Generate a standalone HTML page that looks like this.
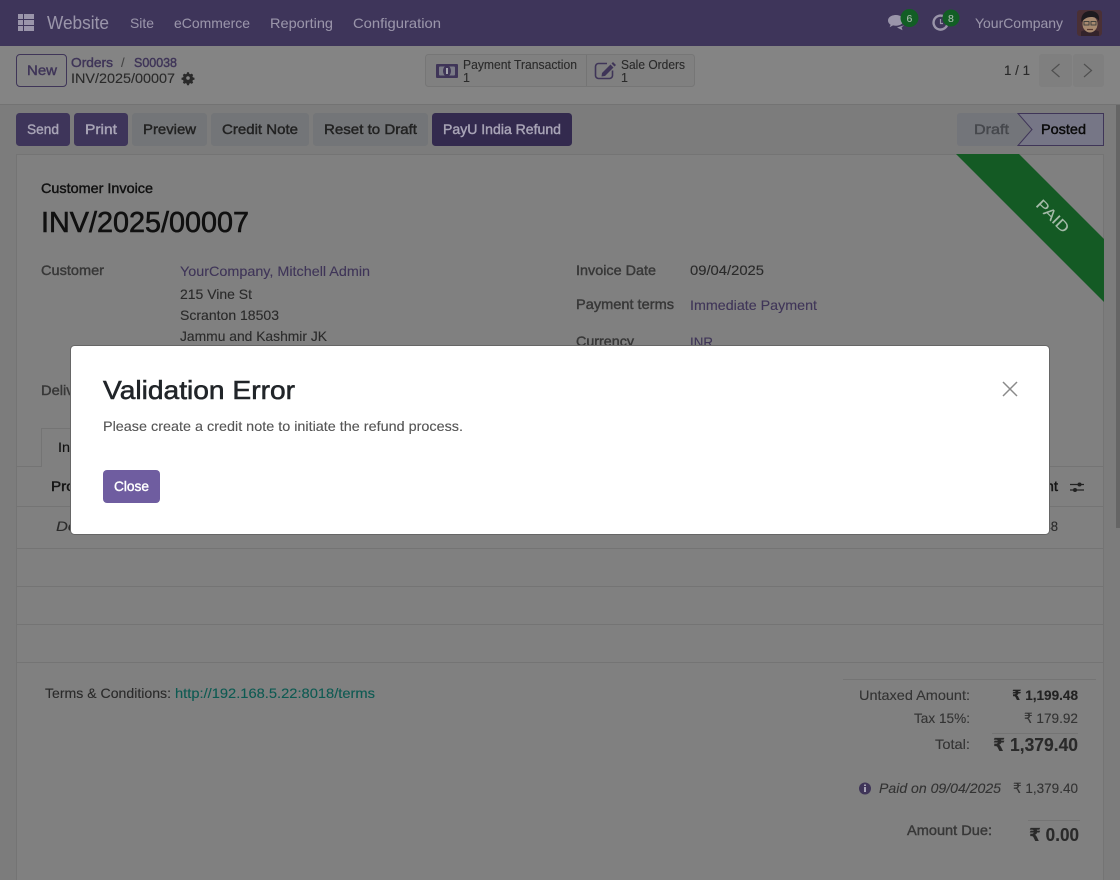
<!DOCTYPE html>
<html lang="en"><head><meta charset="utf-8"><title>Validation Error</title>
<style>
html,body{margin:0;padding:0;width:1120px;height:880px;overflow:hidden;background:#7c7c7c}
svg{display:block}
text{font-family:"Liberation Sans","DejaVu Sans",sans-serif;font-size:14px;color:#2a2a2a;fill:currentColor;stroke:currentColor;stroke-width:.12;white-space:pre}
.m{stroke-width:.42}
.nav{color:#9a95aa;stroke-width:.05}
.lk{color:#3f3558}
.lb{color:#383838;stroke-width:.42}
.bw{color:#a8a4b6;stroke-width:.42}
.bg{color:#222;stroke-width:.42}
.h{color:#151515;stroke-width:.45}
</style></head><body>
<svg width="1120" height="880" viewBox="0 0 1120 880" xmlns="http://www.w3.org/2000/svg">
<!-- page bg -->
<rect width="1120" height="880" fill="#7c7c7c"/>
<!-- navbar -->
<rect width="1120" height="46" fill="#3e355a"/>
<g fill="#9a95aa">
<rect x="18" y="14" width="5" height="5"/><rect x="24" y="14" width="5" height="5"/><rect x="29" y="14" width="5" height="5"/>
<rect x="18" y="20" width="5" height="5"/><rect x="24" y="20" width="5" height="5"/><rect x="29" y="20" width="5" height="5"/>
<rect x="18" y="26" width="5" height="5"/><rect x="24" y="26" width="5" height="5"/><rect x="29" y="26" width="5" height="5"/>
</g>
<text x="47" y="29" class="nav" style="font-size:18px" textLength="62" lengthAdjust="spacingAndGlyphs">Website</text>
<text x="130" y="28" class="nav" textLength="24" lengthAdjust="spacingAndGlyphs">Site</text>
<text x="174" y="28" class="nav" textLength="76" lengthAdjust="spacingAndGlyphs">eCommerce</text>
<text x="270" y="28" class="nav" textLength="63" lengthAdjust="spacingAndGlyphs">Reporting</text>
<text x="353" y="28" class="nav" textLength="88" lengthAdjust="spacingAndGlyphs">Configuration</text>
<!-- chat icon -->
<path d="M896 15c-4.500 0-8 2.300-8 5.500 0 1.800 1 3.200 2.600 4.200l-1 2.600 3.400-1.900c1 .2 2 .3 3 .3 4.400 0 7.500-2.300 7.500-5.200S900.500 15 896 15z" fill="#9a95aa"/>
<path d="M897 27.500l5.500 2.800-.9-3 2.500-2z" fill="#9a95aa"/>
<circle cx="909.500" cy="18" r="9" fill="#125e25"/>
<text x="906.500" y="22" style="font-size:10.500px;color:#a8bcae">6</text>
<!-- activity icon -->
<path d="M944 16.500a7 7 0 1 0 3.500 7" fill="none" stroke="#9a95aa" stroke-width="2.400"/>
<path d="M940.500 19v4.500h2.500" fill="none" stroke="#9a95aa" stroke-width="1.200"/>
<circle cx="951" cy="18" r="8.500" fill="#125e25"/>
<text x="948" y="22" style="font-size:10.500px;color:#a8bcae">8</text>
<text x="975" y="28" class="nav" textLength="88" lengthAdjust="spacingAndGlyphs">YourCompany</text>
<!-- avatar -->
<rect x="1077" y="10" width="25" height="26" rx="3" fill="#4a3035"/>
<path d="M1081 36v-4c0-1 3-2 9-2s9 1 9 2v4z" fill="#33232b"/>
<ellipse cx="1090" cy="24" rx="7.500" ry="8.500" fill="#a88a70"/>
<path d="M1081.500 22c-1-7 3-11 9-11s9.500 3.500 8.500 10c-2-3-4-4-8-4s-7 2-9.500 5z" fill="#1d1a1e"/>
<rect x="1084" y="21.500" width="5" height="3.500" fill="none" stroke="#3a3a3a" stroke-width=".9"/>
<rect x="1091" y="21.500" width="5" height="3.500" fill="none" stroke="#3a3a3a" stroke-width=".9"/>
<path d="M1087 29.500h6" stroke="#5a3a30" stroke-width="1.200"/>

<!-- control panel -->
<rect y="46" width="1120" height="58" fill="#848484"/>
<rect y="104" width="1120" height="1" fill="#737373"/>
<rect x="16.500" y="54.500" width="50" height="32" rx="3.500" fill="#848484" stroke="#3f3558"/>
<text x="27" y="75" class="lk m" textLength="30" lengthAdjust="spacingAndGlyphs">New</text>
<text x="71" y="67" class="lk m" style="font-size:13px" textLength="42" lengthAdjust="spacingAndGlyphs">Orders</text>
<text x="121" y="67" style="font-size:13px;color:#444">/</text>
<text x="134" y="67" class="lk m" style="font-size:13px" textLength="43" lengthAdjust="spacingAndGlyphs">S00038</text>
<text x="71" y="83" textLength="104" lengthAdjust="spacingAndGlyphs">INV/2025/00007</text>
<!-- gear -->
<g transform="translate(188 78) scale(.82)" fill="#2a2a2a">
<path fill-rule="evenodd" d="M-1.200-7h2.400l.4 1.900 1.300.6 1.700-.9 1.700 1.700-.9 1.700.6 1.300 1.900.4v2.400l-1.900.4-.6 1.300.9 1.700-1.700 1.700-1.700-.9-1.300.6-.4 1.900h-2.400l-.4-1.900-1.300-.6-1.700.9-1.700-1.700.9-1.700-.6-1.300-1.900-.4v-2.400l1.900-.4.600-1.300-.9-1.700 1.700-1.700 1.700.9 1.300-.6zM0-2.200a2.200 2.200 0 1 0 0 4.400 2.200 2.200 0 0 0 0-4.400z"/>
</g>
<!-- stat buttons -->
<rect x="425.500" y="54.500" width="269" height="32" rx="3" fill="#808080" stroke="#767676"/>
<rect x="586" y="55" width="1" height="31" fill="#747474"/>
<rect x="436" y="64" width="22" height="14" rx="1" fill="#3f3558"/>
<rect x="439" y="66.500" width="16" height="9" rx="1" fill="#7a7a86"/>
<ellipse cx="447" cy="71" rx="4" ry="5.500" fill="#3f3558"/>
<rect x="446" y="68" width="2" height="6" fill="#a4a4ae"/>
<text x="463" y="69" style="font-size:12.500px" textLength="114" lengthAdjust="spacingAndGlyphs">Payment Transaction</text>
<text x="463" y="82" style="font-size:12.500px">1</text>
<path d="M607 63.500h-8.500a3 3 0 0 0-3 3v9a3 3 0 0 0 3 3h11a3 3 0 0 0 3-3v-5" fill="none" stroke="#3f3558" stroke-width="1.600"/>
<path d="M602 73l8.500-8.500 3 3L605 76l-3.500.5z M611.500 63.500l1.500-1.500 3 3-1.500 1.500z" fill="#3f3558"/>
<text x="621" y="69" style="font-size:12.500px" textLength="64" lengthAdjust="spacingAndGlyphs">Sale Orders</text>
<text x="621" y="82" style="font-size:12.500px">1</text>
<!-- pager -->
<text x="1004" y="75" textLength="26" lengthAdjust="spacingAndGlyphs">1 / 1</text>
<rect x="1039" y="54" width="33" height="33" rx="3" fill="#7f7f7f"/>
<rect x="1073" y="54" width="31" height="33" rx="3" fill="#7f7f7f"/>
<path d="M1059.500 64l-7.500 6.500 7.500 6.500M1084 64l7.500 6.500-7.500 6.500" fill="none" stroke="#505050" stroke-width="1.200"/>

<!-- action bar -->
<g fill="#3e355a"><rect x="16" y="113" width="54" height="33" rx="3.500"/><rect x="74" y="113" width="54" height="33" rx="3.500"/></g>
<text x="27" y="134" class="bw" textLength="32" lengthAdjust="spacingAndGlyphs">Send</text>
<text x="85" y="134" class="bw" textLength="32" lengthAdjust="spacingAndGlyphs">Print</text>
<g fill="#737578"><rect x="132" y="113" width="75" height="33" rx="3.500"/><rect x="211" y="113" width="98" height="33" rx="3.500"/><rect x="313" y="113" width="115" height="33" rx="3.500"/></g>
<text x="143" y="134" class="bg" textLength="53" lengthAdjust="spacingAndGlyphs">Preview</text>
<text x="222" y="134" class="bg" textLength="76" lengthAdjust="spacingAndGlyphs">Credit Note</text>
<text x="324" y="134" class="bg" textLength="93" lengthAdjust="spacingAndGlyphs">Reset to Draft</text>
<rect x="432" y="113" width="140" height="33" rx="3.500" fill="#332a4e"/>
<text x="443" y="134" class="bw" textLength="118" lengthAdjust="spacingAndGlyphs">PayU India Refund</text>
<!-- status bar -->
<path d="M960 113h58l14 16.500-14 16.500h-58a3 3 0 0 1-3-3v-27a3 3 0 0 1 3-3z" fill="#73757a"/>
<path d="M1018 113.500h85.500v32h-85.500l14-16z" fill="#767686" stroke="#3f3558"/>
<text x="974" y="134" class="m" style="color:#46484d" textLength="35" lengthAdjust="spacingAndGlyphs">Draft</text>
<text x="1041" y="134" class="m" style="color:#0a0a0a" textLength="45" lengthAdjust="spacingAndGlyphs">Posted</text>
<!-- scrollbar -->
<rect x="1116" y="105" width="4" height="423" fill="#656565"/>
<!-- sheet -->
<rect x="16.500" y="154.500" width="1087" height="740" fill="#808080" stroke="#747474"/>
<!-- ribbon -->
<path d="M956 154h63l85 85v63z" fill="#145a24"/>
<text transform="translate(1052 217) rotate(45)" text-anchor="middle" dominant-baseline="middle" style="font-size:15px;color:#a6bbaa" textLength="40" lengthAdjust="spacingAndGlyphs">PAID</text>
<text x="41" y="193" class="m" style="color:#111" textLength="112" lengthAdjust="spacingAndGlyphs">Customer Invoice</text>
<text x="41" y="232" style="color:#101010;font-size:29px;stroke-width:.6" textLength="208" lengthAdjust="spacingAndGlyphs">INV/2025/00007</text>
<text x="41" y="275" class="lb" textLength="63" lengthAdjust="spacingAndGlyphs">Customer</text>
<text x="180" y="276" class="lk" textLength="190" lengthAdjust="spacingAndGlyphs">YourCompany, Mitchell Admin</text>
<text x="180" y="299" textLength="72" lengthAdjust="spacingAndGlyphs">215 Vine St</text>
<text x="180" y="320" textLength="99" lengthAdjust="spacingAndGlyphs">Scranton 18503</text>
<text x="180" y="341" textLength="147" lengthAdjust="spacingAndGlyphs">Jammu and Kashmir JK</text>
<text x="576" y="275" class="lb" textLength="80" lengthAdjust="spacingAndGlyphs">Invoice Date</text>
<text x="690" y="275" textLength="74" lengthAdjust="spacingAndGlyphs">09/04/2025</text>
<text x="576" y="309" class="lb" textLength="98" lengthAdjust="spacingAndGlyphs">Payment terms</text>
<text x="690" y="310" class="lk" textLength="127" lengthAdjust="spacingAndGlyphs">Immediate Payment</text>
<text x="576" y="346" class="lb" textLength="58" lengthAdjust="spacingAndGlyphs">Currency</text>
<text x="690" y="347" class="lk" textLength="23" lengthAdjust="spacingAndGlyphs">INR</text>
<text x="41" y="395" class="lb" textLength="110" lengthAdjust="spacingAndGlyphs">Delivery Address</text>
<!-- tabs + table -->
<path d="M17 466.500h24.500v-38h60" fill="none" stroke="#747474"/>
<path d="M101 466.500H1103" stroke="#747474"/>
<text x="58" y="452" style="color:#111" textLength="84" lengthAdjust="spacingAndGlyphs">Invoice Lines</text>
<text x="51" y="491" class="h" textLength="60" lengthAdjust="spacingAndGlyphs">Products</text>
<text x="1007" y="491" class="h" textLength="51" lengthAdjust="spacingAndGlyphs">Amount</text>
<path d="M1070 484.500h14M1070 490h14" stroke="#222" stroke-width="1.200"/>
<circle cx="1079.500" cy="484.500" r="2" fill="#222"/><circle cx="1075" cy="490" r="2" fill="#222"/>
<g fill="#747474"><rect x="17" y="506" width="1086" height="1"/><rect x="17" y="548" width="1086" height="1"/><rect x="17" y="586" width="1086" height="1"/><rect x="17" y="624" width="1086" height="1"/><rect x="17" y="662" width="1086" height="1"/></g>
<text x="56" y="531" style="font-style:italic" textLength="110" lengthAdjust="spacingAndGlyphs">Down payment</text>
<text x="995" y="531" textLength="63" lengthAdjust="spacingAndGlyphs">₹ 1,199.48</text>
<!-- terms -->
<text x="45" y="698" textLength="126" lengthAdjust="spacingAndGlyphs">Terms &amp; Conditions:</text>
<text x="175" y="698" style="color:#0d5a52" textLength="200" lengthAdjust="spacingAndGlyphs">http://192.168.5.22:8018/terms</text>
<!-- totals -->
<rect x="843" y="679" width="253" height="1" fill="#747474"/>
<text x="859" y="700" style="color:#333" textLength="111" lengthAdjust="spacingAndGlyphs">Untaxed Amount:</text>
<text x="1012" y="700" style="font-weight:bold;color:#222" textLength="66" lengthAdjust="spacingAndGlyphs">₹ 1,199.48</text>
<text x="914" y="723" style="color:#333" textLength="56" lengthAdjust="spacingAndGlyphs">Tax 15%:</text>
<text x="1024" y="723" style="color:#333" textLength="54" lengthAdjust="spacingAndGlyphs">₹ 179.92</text>
<rect x="992" y="733" width="86" height="1" fill="#747474"/>
<text x="935" y="749" style="color:#333" textLength="35" lengthAdjust="spacingAndGlyphs">Total:</text>
<text x="993" y="751" style="font-size:18px;font-weight:bold;color:#2a2a2a" textLength="85" lengthAdjust="spacingAndGlyphs">₹ 1,379.40</text>
<circle cx="865" cy="788.500" r="6" fill="#3f3558"/>
<rect x="864" y="787" width="2" height="5" fill="#a8a4b6"/><rect x="864" y="784.500" width="2" height="1.500" fill="#a8a4b6"/>
<text x="879" y="793" style="font-style:italic;color:#333" textLength="122" lengthAdjust="spacingAndGlyphs">Paid on 09/04/2025</text>
<text x="1013" y="793" style="color:#333" textLength="65" lengthAdjust="spacingAndGlyphs">₹ 1,379.40</text>
<text x="907" y="835" class="lb" textLength="85" lengthAdjust="spacingAndGlyphs">Amount Due:</text>
<rect x="1028" y="820" width="52" height="1" fill="#747474"/>
<text x="1029" y="841" style="font-size:18px;font-weight:bold;color:#2a2a2a" textLength="50" lengthAdjust="spacingAndGlyphs">₹ 0.00</text>

<!-- modal -->
<rect x="70.500" y="345.500" width="979" height="189" rx="4" fill="#ffffff" stroke="#666"/>
<text x="103" y="399" style="font-size:26px;color:#212529;stroke-width:.55" textLength="192" lengthAdjust="spacingAndGlyphs">Validation Error</text>
<text x="103" y="431" style="color:#555" textLength="360" lengthAdjust="spacingAndGlyphs">Please create a credit note to initiate the refund process.</text>
<path d="M1003 382l14 14M1017 382l-14 14" stroke="#8a8a8a" stroke-width="1.500" fill="none"/>
<rect x="103" y="470" width="57" height="33" rx="4" fill="#6f5da0"/>
<text x="114" y="491" class="m" style="color:#fff" textLength="35" lengthAdjust="spacingAndGlyphs">Close</text>
</svg>
</body></html>
